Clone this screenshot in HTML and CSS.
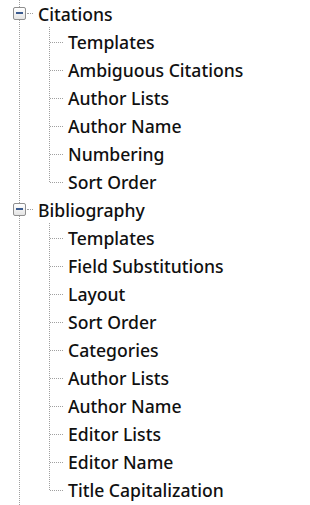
FILE: index.html
```html
<!DOCTYPE html>
<html lang="en">
<head>
    <meta charset="UTF-8">
    <meta name="viewport" content="width=device-width, initial-scale=1.0">
    <title>Style Tree</title>
    <link rel="stylesheet" href="styles.css">
</head>
<body>
    <ul class="tree">
        <li class="group">
            <div class="group-row">
                <span class="toggle"><span class="minus"></span></span>
                <span class="link"></span>
                <span class="label">Citations</span>
            </div>
            <ul class="children">
                <li class="leaf"><span class="label">Templates</span></li>
                <li class="leaf"><span class="label">Ambiguous Citations</span></li>
                <li class="leaf"><span class="label">Author Lists</span></li>
                <li class="leaf"><span class="label">Author Name</span></li>
                <li class="leaf"><span class="label">Numbering</span></li>
                <li class="leaf"><span class="label">Sort Order</span></li>
            </ul>
        </li>
        <li class="group">
            <div class="group-row">
                <span class="toggle"><span class="minus"></span></span>
                <span class="link"></span>
                <span class="label">Bibliography</span>
            </div>
            <ul class="children">
                <li class="leaf"><span class="label">Templates</span></li>
                <li class="leaf"><span class="label">Field Substitutions</span></li>
                <li class="leaf"><span class="label">Layout</span></li>
                <li class="leaf"><span class="label">Sort Order</span></li>
                <li class="leaf"><span class="label">Categories</span></li>
                <li class="leaf"><span class="label">Author Lists</span></li>
                <li class="leaf"><span class="label">Author Name</span></li>
                <li class="leaf"><span class="label">Editor Lists</span></li>
                <li class="leaf"><span class="label">Editor Name</span></li>
                <li class="leaf"><span class="label">Title Capitalization</span></li>
            </ul>
        </li>
    </ul>
</body>
</html>
```

FILE: styles.css
```css
body {
    margin: 0;
    background: #ffffff;
    font-family: "Noto Sans", "Open Sans", sans-serif;
    font-size: 17.6px;
    font-weight: 500;
    color: #101010;
    overflow: hidden;
}
ul {
    list-style: none;
    margin: 0;
    padding: 0;
}
.tree {
    position: relative;
    height: 505px;
}
.tree::before {
    content: "";
    position: absolute;
    left: 19px;
    top: 0;
    bottom: 0;
    border-left: 1px dotted #a0a0a0;
}
.group-row {
    position: relative;
    height: 28px;
    display: flex;
    align-items: center;
    padding-left: 13px;
}
.toggle {
    width: 11px;
    height: 11px;
    border: 1px solid #8f8f8f;
    border-radius: 2px;
    background: linear-gradient(#ffffff, #e4e4e4);
    display: flex;
    align-items: center;
    justify-content: center;
    margin-top: -2px;
}
.minus {
    width: 7px;
    height: 2px;
    background: #3b5b8f;
}
.link {
    width: 6px;
    margin-left: 1px;
    margin-top: -2px;
    border-top: 1px dotted #a0a0a0;
}
.group-row .label {
    margin-left: 5px;
}
.label {
    line-height: 28px;
    white-space: nowrap;
    margin-top: -1px;
}
.leaf {
    position: relative;
    height: 28px;
    display: flex;
    align-items: center;
    padding-left: 68px;
}
.leaf::before {
    content: "";
    position: absolute;
    left: 49px;
    top: -1px;
    bottom: 0;
    border-left: 1px dotted #a0a0a0;
}
.leaf:last-child::before {
    bottom: 14px;
}
.leaf::after {
    content: "";
    position: absolute;
    left: 50px;
    top: 14px;
    width: 13px;
    border-top: 1px dotted #a0a0a0;
}
```
